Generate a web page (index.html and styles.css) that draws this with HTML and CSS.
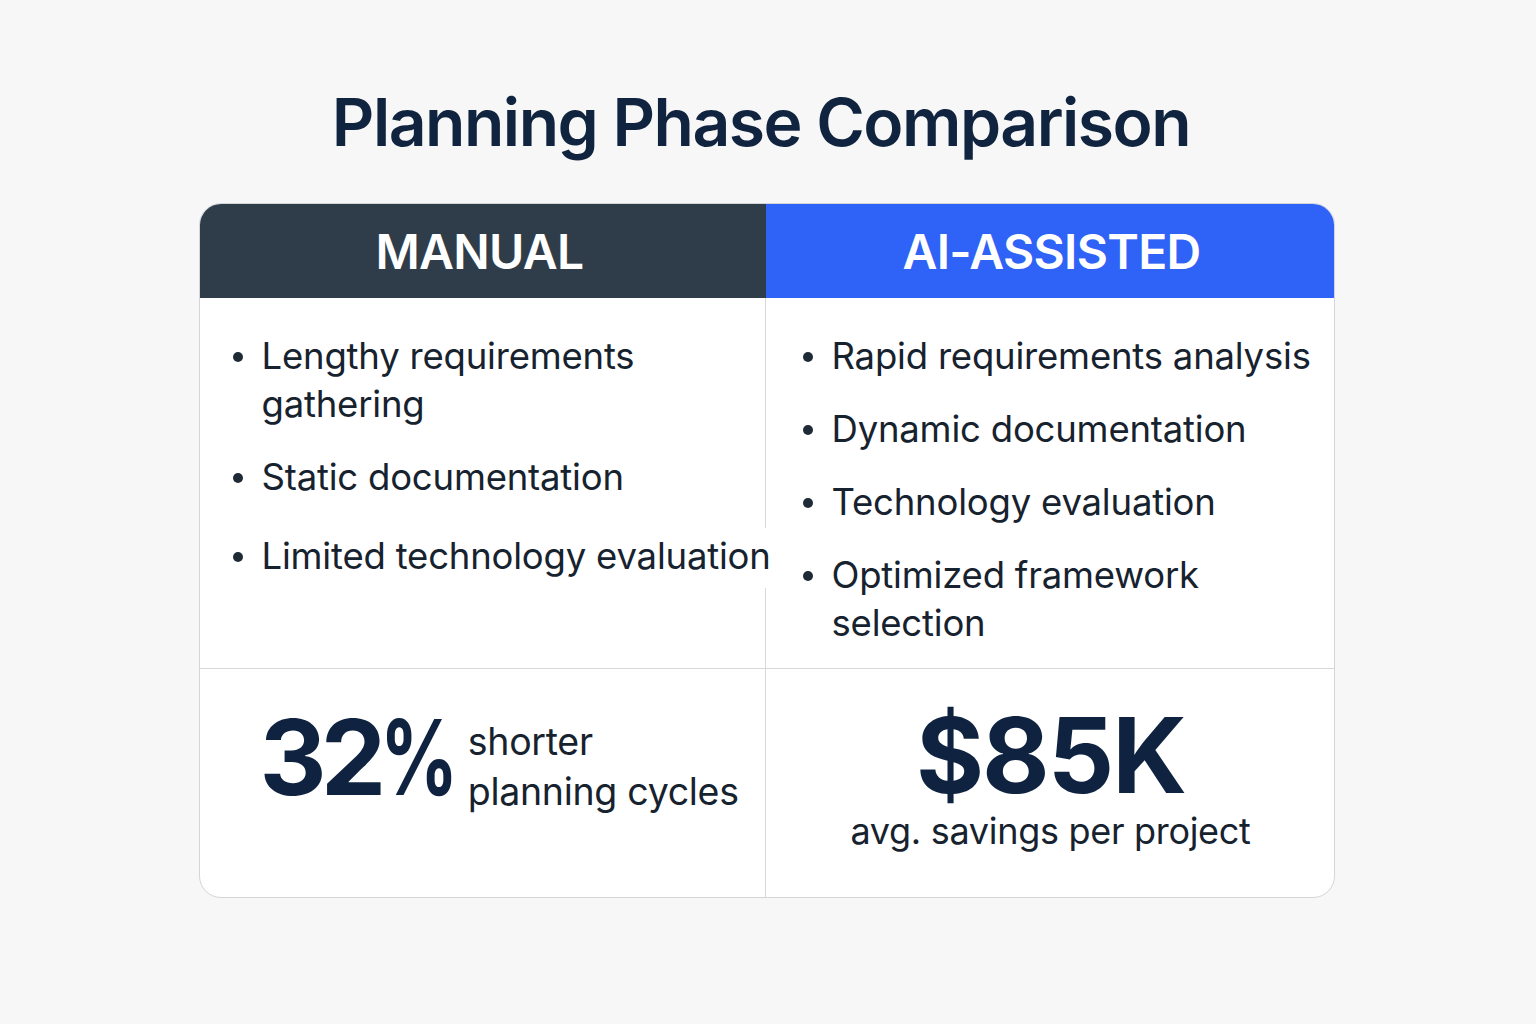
FILE: index.html
```html
<!DOCTYPE html>
<html lang="en">
<head>
<meta charset="utf-8">
<title>Planning Phase Comparison</title>
<link rel="stylesheet" href="styles.css">
</head>
<body>
<main class="page">
  <h1 class="title">Planning Phase Comparison</h1>
  <section class="card">
    <div class="head head-manual">MANUAL</div>
    <div class="head head-ai">AI-ASSISTED</div>
    <div class="cell list-cell left">
      <ul class="list">
        <li>Lengthy requirements gathering</li>
        <li>Static documentation</li>
        <li class="last"><span class="over">Limited technology evaluation</span></li>
      </ul>
    </div>
    <div class="cell list-cell right">
      <ul class="list">
        <li>Rapid requirements analysis</li>
        <li>Dynamic documentation</li>
        <li>Technology evaluation</li>
        <li>Optimized framework selection</li>
      </ul>
    </div>
    <div class="cell stat-cell stat-left">
      <div class="big big-pct">32<span class="pct">%</span></div>
      <div class="stat-text">shorter<br>planning cycles</div>
    </div>
    <div class="cell stat-cell stat-right">
      <div class="big">$85K</div>
      <div class="stat-text">avg. savings per project</div>
    </div>
  </section>
</main>
</body>
</html>
```

FILE: styles.css
```css
* { box-sizing: border-box; }
html, body { margin: 0; padding: 0; }
body {
  background: #f7f7f7;
  font-family: Inter, "Noto Sans", "Liberation Sans", sans-serif;
  color: #142033;
}
.page {
  width: 1536px;
  height: 1024px;
  display: flex;
  flex-direction: column;
  align-items: center;
  padding-top: 80px;
}
.title {
  margin: 0 14px 0 0;
  font-size: 66px;
  font-weight: 600;
  color: #10233f;
  letter-spacing: -1.5px;
  line-height: 84px;
}
.card {
  margin: 39px 3px 0 0;
  width: 1136px;
  height: 695px;
  background: #fff;
  border: 1px solid #d3d5d8;
  border-radius: 22px;
  overflow: hidden;
  display: grid;
  grid-template-columns: 566px 1fr;
  grid-template-rows: 94px 370px 1fr;
}
.head {
  display: flex;
  align-items: center;
  justify-content: center;
  color: #fff;
  font-size: 48px;
  font-weight: 600;
  letter-spacing: -0.7px;
}
.head-manual { background: #2f3d4b; padding-right: 6px; }
.head-ai { background: #2f62f6; padding-left: 4px; }
.left { border-right: 1px solid #d6d8db; }
.list {
  list-style: none;
  margin: 0;
  padding: 0;
  font-size: 36.5px;
  line-height: 48px;
  color: #17222f;
  letter-spacing: -0.2px;
}
.left .list { padding: 34px 0 0 62px; }
.right .list { padding: 34px 0 0 66px; }
.list li {
  position: relative;
  margin-bottom: 25px;
}
.left .list li:first-child { width: 420px; }
.right .list li:last-child { width: 400px; }
.left .list li:nth-child(2) { margin-bottom: 31px; }
.list li::before {
  content: "";
  position: absolute;
  left: -29px;
  top: 20px;
  width: 10px;
  height: 10px;
  border-radius: 50%;
  background: #1f2a37;
}
.last { white-space: nowrap; }
.over {
  position: relative;
  z-index: 1;
  background: #fff;
  padding: 6px 2px 10px 0;
}
.stat-cell { border-top: 1px solid #d6d8db; }
.stat-left {
  border-right: 1px solid #d6d8db;
  display: flex;
  align-items: flex-start;
  padding: 40px 0 0 60px;
  gap: 20px;
}
.big {
  font-size: 104px;
  font-weight: 700;
  color: #0f2341;
  letter-spacing: -2px;
  line-height: 1;
}
.big-pct { margin-top: -4px; letter-spacing: -6px; white-space: nowrap; }
.pct {
  display: inline-block;
  transform: scaleX(0.74);
  transform-origin: left center;
  margin-right: -38px;
  letter-spacing: 0;
}
.stat-text {
  font-size: 37.5px;
  line-height: 50px;
  color: #17222f;
  letter-spacing: -0.3px;
  white-space: nowrap;
}
.stat-left .stat-text { margin-top: 8px; }
.stat-right {
  display: flex;
  flex-direction: column;
  align-items: center;
  padding: 34px 0 0 2px;
}
.stat-right .stat-text { font-size: 36px; margin-top: -1px; }
```
